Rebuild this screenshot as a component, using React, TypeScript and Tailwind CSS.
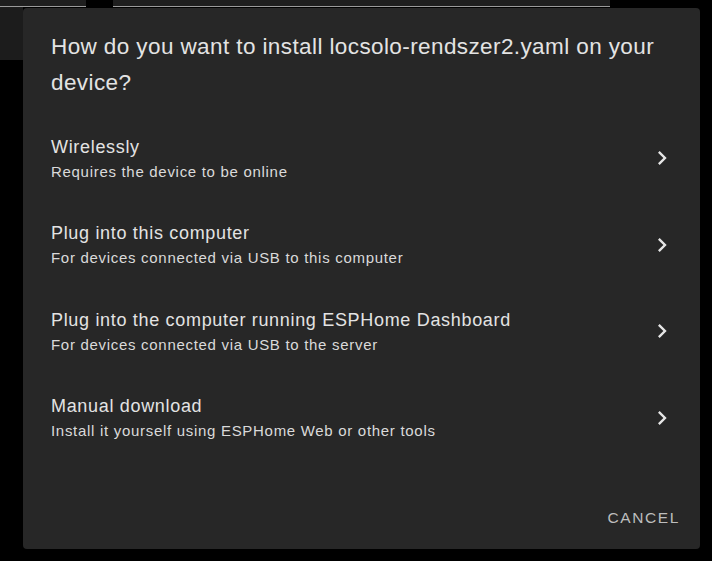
import React from "react";

const rows = [
  { title: "Wirelessly", sub: "Requires the device to be online" },
  { title: "Plug into this computer", sub: "For devices connected via USB to this computer" },
  { title: "Plug into the computer running ESPHome Dashboard", sub: "For devices connected via USB to the server" },
  { title: "Manual download", sub: "Install it yourself using ESPHome Web or other tools" },
];

function Chevron() {
  return (
    <svg width="28" height="28" viewBox="0 0 24 24" className="shrink-0">
      <path
        d="M8.59,16.58L13.17,12L8.59,7.41L10,6L16,12L10,18L8.59,16.58Z"
        fill="#e6e6e6"
      />
    </svg>
  );
}

export default function App() {
  return (
    <div
      className="w-[712px] h-[561px] overflow-hidden bg-black flex flex-col"
      style={{ fontFamily: '"Liberation Sans", Arial, sans-serif' }}
    >
      {/* background top strip */}
      <div className="flex h-[7px] shrink-0">
        <div className="w-[86px] h-[7px] bg-[#1e1e1e] border-b border-[#9a9a9a]" />
        <div className="w-[27px] h-[7px] bg-black" />
        <div className="w-[497px] h-[7px] bg-[#1e1e1e] border-b border-[#9a9a9a]" />
      </div>
      <div className="flex">
        <div className="w-[23px] h-[53px] bg-[#1c1c1c] shrink-0" />
        {/* dialog */}
        <div className="mt-[1px] w-[677px] h-[541px] rounded-[4px] bg-[#272727] flex flex-col">
          <div className="pt-[21px] pl-[28px] pr-[22px] text-[22.5px] leading-[36px] tracking-[0.4px] text-[#e3e3e3]">
            How do you want to install locsolo-rendszer2.yaml on your device?
          </div>
          <div className="mt-[14px] flex flex-col">
            {rows.map((r) => (
              <div
                key={r.title}
                className="h-[86.5px] flex items-center pl-[28px] pr-[24px]"
              >
                <div className="flex-1 flex flex-col">
                  <div className="text-[18px] leading-[24px] tracking-[0.68px] text-[#e3e3e3]">
                    {r.title}
                  </div>
                  <div className="mt-[3px] text-[15px] leading-[20px] tracking-[0.7px] text-[#dadada]">
                    {r.sub}
                  </div>
                </div>
                <Chevron />
              </div>
            ))}
          </div>
          <div className="mt-auto flex justify-end pr-[12px] pb-[13px]">
            <button className="h-[36px] px-[8px] text-[15.5px] leading-[36px] tracking-[1.6px] text-[#bdbdbd] uppercase">
              Cancel
            </button>
          </div>
        </div>
      </div>
    </div>
  );
}
